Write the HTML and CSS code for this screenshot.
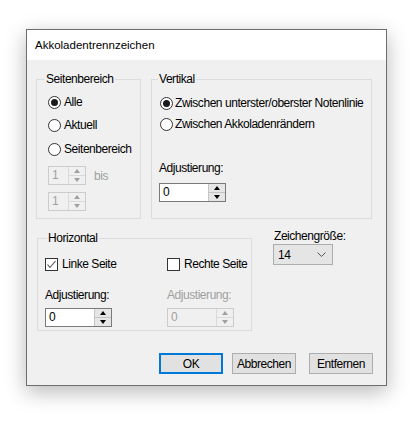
FILE: index.html
```html
<!DOCTYPE html>
<html lang="de">
<head>
<meta charset="utf-8">
<title>Akkoladentrennzeichen</title>
<link rel="stylesheet" href="styles.css">
</head>
<body>
<div class="dialog">
  <div class="titlebar">Akkoladentrennzeichen</div>
  <div class="content">
    <div class="row1">
      <fieldset class="grp seiten">
        <legend>Seitenbereich</legend>
        <div class="opt"><span class="radio on"></span><span>Alle</span></div>
        <div class="opt o2"><span class="radio"></span><span>Aktuell</span></div>
        <div class="opt o3"><span class="radio"></span><span>Seitenbereich</span></div>
        <div class="spinrow s1">
          <div class="spin small disabled"><span class="field">1</span><span class="btns"><span class="up"></span><span class="dn"></span></span></div>
          <span class="bis">bis</span>
        </div>
        <div class="spinrow s2">
          <div class="spin small disabled"><span class="field">1</span><span class="btns"><span class="up"></span><span class="dn"></span></span></div>
        </div>
      </fieldset>
      <fieldset class="grp vert">
        <legend>Vertikal</legend>
        <div class="opt"><span class="radio on"></span><span>Zwischen unterster/oberster Notenlinie</span></div>
        <div class="opt v2"><span class="radio"></span><span>Zwischen Akkoladenrändern</span></div>
        <div class="lbl vlbl">Adjustierung:</div>
        <div class="spin vspin"><span class="field">0</span><span class="btns"><span class="up"></span><span class="dn"></span></span></div>
      </fieldset>
    </div>
    <div class="row2">
      <fieldset class="grp horiz">
        <legend>Horizontal</legend>
        <div class="hgrid">
          <div class="hcol">
            <div class="opt"><span class="check"><svg width="11" height="11" viewBox="0 0 11 11"><polyline points="1.5,5.5 4,8.5 9.5,2" fill="none" stroke="#4d4d4d" stroke-width="1.1"/></svg></span><span>Linke Seite</span></div>
            <div class="lbl hlbl">Adjustierung:</div>
            <div class="spin"><span class="field">0</span><span class="btns"><span class="up"></span><span class="dn"></span></span></div>
          </div>
          <div class="hcol">
            <div class="opt"><span class="check"></span><span>Rechte Seite</span></div>
            <div class="lbl hlbl dis">Adjustierung:</div>
            <div class="spin disabled"><span class="field">0</span><span class="btns"><span class="up"></span><span class="dn"></span></span></div>
          </div>
        </div>
      </fieldset>
      <div class="zeichen">
        <div class="lbl">Zeichengröße:</div>
        <div class="combo"><span>14</span><svg class="chev" width="9" height="5" viewBox="0 0 9 5"><polyline points="0.5,0.5 4.5,4.5 8.5,0.5" fill="none" stroke="#555" stroke-width="1"/></svg></div>
      </div>
    </div>
    <div class="buttons">
      <button class="btn default">OK</button>
      <button class="btn b2">Abbrechen</button>
      <button class="btn b3">Entfernen</button>
    </div>
  </div>
</div>
</body>
</html>
```
FILE: styles.css
```css
* { box-sizing: border-box; }
html, body { margin: 0; background: #fff; }
body {
  padding: 29px 0 0 26px;
  height: 421px;
  overflow: hidden;
  font-family: "Liberation Sans", Arial, sans-serif;
  font-size: 12px;
  letter-spacing: -0.45px;
  color: #000;
}
.dialog {
  width: 361px;
  height: 357px;
  border: 1px solid #6e6e6e;
  background: #f0f0f0;
  box-shadow: 0 6px 20px rgba(0, 0, 0, 0.28);
  display: flex;
  flex-direction: column;
}
.titlebar {
  height: 30px;
  background: #fff;
  font-family: "Liberation Sans", Arial, sans-serif;
  font-size: 11.5px;
  letter-spacing: 0;
  line-height: 30px;
  padding-left: 8px;
}
.content { flex: 1; padding: 12px 0 0 9px; }

.row1 { display: flex; gap: 10px; height: 147px; }
.grp {
  margin: 0;
  min-width: 0;
  border: 1px solid #dcdcdc;
}
legend {
  line-height: 14px;
  padding: 0 1px;
}
.seiten { width: 105px; padding: 8px 0 0 11px; }
.seiten legend { margin-left: -3px; }
.vert { width: 221px; padding: 9px 0 0 7px; }
.vert legend { margin-left: -1px; }

.opt { display: flex; align-items: center; height: 16px; gap: 2px; white-space: nowrap; }
.seiten .opt { gap: 3px; }
.vert .opt { margin-left: 1px; }
.o2 { margin-top: 7px; }
.o3 { margin-top: 8px; }
.v2 { margin-top: 5px; }

.radio {
  position: relative;
  flex: none;
  width: 13px;
  height: 13px;
  border: 1px solid #333;
  border-radius: 50%;
  background: #fff;
}
.radio.on::after {
  content: "";
  position: absolute;
  left: 2px;
  top: 2px;
  width: 7px;
  height: 7px;
  border-radius: 50%;
  background: #1a1a1a;
}
.check {
  flex: none;
  width: 13px;
  height: 13px;
  border: 1px solid #333;
  background: #fff;
  display: flex;
}
.check svg { display: block; }

.lbl { height: 16px; line-height: 16px; white-space: nowrap; }
.dis, .bis { color: #a0a0a0; }

.spinrow { display: flex; align-items: center; gap: 8px; }
.s1 { margin-top: 9px; }
.s2 { margin-top: 7px; }

.spin {
  display: flex;
  width: 67px;
  height: 19px;
  border: 1px solid #7a7a7a;
  background: #fff;
}
.spin.small { width: 38px; }
.spin .field { flex: 1; padding-left: 3px; line-height: 17px; }
.spin .btns {
  flex: none;
  width: 17px;
  display: flex;
  flex-direction: column;
  background: #e6e6e6;
  border-left: 1px solid #c4c4c4;
}
.spin .btns span { flex: 1; display: flex; align-items: center; justify-content: center; }
.spin .btns .up { border-bottom: 1px solid #c4c4c4; }
.spin .up::before {
  content: "";
  border-left: 3.5px solid transparent;
  border-right: 3.5px solid transparent;
  border-bottom: 4px solid #000;
}
.spin .dn::before {
  content: "";
  border-left: 3.5px solid transparent;
  border-right: 3.5px solid transparent;
  border-top: 4px solid #000;
}
.spin.disabled { border-color: #cccccc; background: #f0f0f0; color: #a0a0a0; }
.spin.disabled .btns { background: #f0f0f0; border-left-color: #dadada; }
.spin.disabled .up { border-bottom-color: #dadada; }
.spin.disabled .up::before { border-bottom-color: #a0a0a0; }
.spin.disabled .dn::before { border-top-color: #a0a0a0; }

.vlbl { margin-top: 28px; }
.vspin { margin-top: 7px; }

.row2 { display: flex; margin-top: 9px; }
.grp.horiz { width: 215px; height: 100px; margin: 3px 0 0 1px; padding: 11px 0 0 7px; }
.horiz legend { margin-left: 2px; }
.hgrid { display: grid; grid-template-columns: 122px 1fr; }
.horiz .opt { gap: 4px; }
.hlbl { margin-top: 15px; }
.hcol .spin { margin-top: 5px; }

.zeichen { margin-left: 21px; }
.zeichen .lbl { padding-left: 1px; }
.combo {
  display: flex;
  align-items: center;
  justify-content: space-between;
  width: 60px;
  height: 21px;
  padding: 0 6px 0 4px;
  border: 1px solid #adadad;
  background: #e5e5e5;
}
.chev { display: block; }

.buttons { display: flex; margin: 22px 0 0 123px; }
.btn {
  width: 64px;
  height: 21px;
  padding: 0;
  border: 1px solid #adadad;
  background: #e1e1e1;
  font-family: inherit;
  font-size: 12px;
  letter-spacing: -0.45px;
  color: #000;
}
.btn.default { border: 2px solid #0078d7; }
.b2 { margin-left: 9px; }
.b3 { margin-left: 13px; }
```
